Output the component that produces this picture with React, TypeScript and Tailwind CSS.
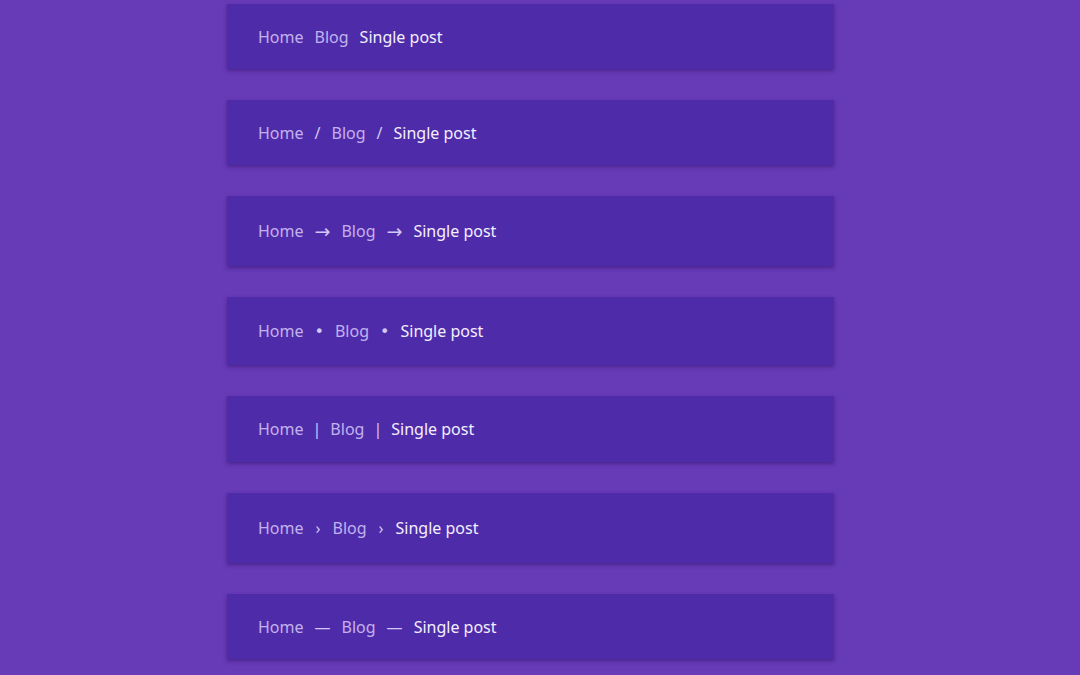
import { FC } from "react";

type Crumbs = {
  sep: string | null;
  height: string;
  gap?: string;
  sepClass?: string;
};

const rows: Crumbs[] = [
  { sep: null, height: "h-[65px]" },
  { sep: "/", height: "h-[65px]" },
  { sep: "→", height: "h-[70px]", gap: "gap-[11px]", sepClass: "font-['DejaVu_Sans'] text-[19px] leading-none" },
  { sep: "•", height: "h-[68px]", gap: "gap-[11px]", sepClass: "font-['DejaVu_Sans'] translate-y-[1px]" },
  { sep: "|", height: "h-[66px]", gap: "gap-[9px]" },
  { sep: "›", height: "h-[70px]", gap: "gap-[12px]" },
  { sep: "—", height: "h-[65px]" },
];

const Breadcrumb: FC<Crumbs> = ({ sep, height, gap = "gap-[11px]", sepClass }) => {
  const items = ["Home", "Blog"];
  return (
    <nav
      className={`${height} w-[607px] bg-[#4e2ca9] shadow-[0_2px_4px_rgba(40,10,90,0.45)] flex items-center px-[31px]`}
    >
      <ol className={`flex items-center ${gap} text-[16px] text-[#c4b1ef]`}>
        {items.map((item) => (
          <li key={item} className={`flex items-center ${gap}`}>
            <span>{item}</span>
            {sep && (
              <span className={`text-[#d4c6f5] ${sepClass ?? ""}`}>{sep}</span>
            )}
          </li>
        ))}
        <li className="text-[#f4efff]">Single post</li>
      </ol>
    </nav>
  );
};

const App: FC = () => {
  return (
    <div
      className="min-h-[675px] bg-[#673ab7] flex flex-col items-center gap-[31px] pt-[4px] pb-10 pr-[19px]"
      style={{ fontFamily: '"Noto Sans", "Open Sans", sans-serif' }}
    >
      {rows.map((r, i) => (
        <Breadcrumb key={i} {...r} />
      ))}
    </div>
  );
};

export default App;
